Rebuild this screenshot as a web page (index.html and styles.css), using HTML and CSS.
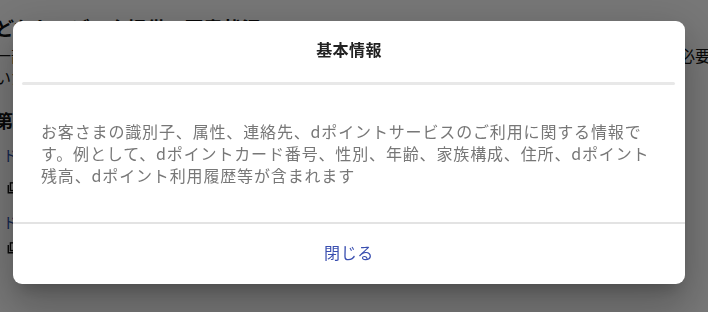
FILE: index.html
```html
<!DOCTYPE html>
<html lang="ja">
<head>
<meta charset="utf-8">
<link rel="stylesheet" href="styles.css">
</head>
<body>
<div class="page">
  <h2 class="page-title">どなたのデータ提供の同意状況</h2>
  <div class="page-lead">
    <span>一部のサービスをご利用いただくには、お客さまのデータの提供について</span>
    <span>同意が必要</span>
  </div>
  <p class="page-lead2">いただく場合があります。</p>
  <h3 class="page-sub">第三者提供</h3>
  <div class="link-row"><a class="link">ドコモのサービス</a></div>
  <div class="icon-row"><svg class="copy-icon" viewBox="0 0 14 14" width="12" height="12"><path d="M1.5 3.5v9h9" fill="none" stroke="#111" stroke-width="1.6"/><rect x="4" y="1" width="9" height="9" fill="none" stroke="#111" stroke-width="1.6"/></svg></div>
  <div class="link-row link-row2"><a class="link">ドコモのサービス</a></div>
  <div class="icon-row icon-row2"><svg class="copy-icon" viewBox="0 0 14 14" width="12" height="12"><path d="M1.5 3.5v9h9" fill="none" stroke="#111" stroke-width="1.6"/><rect x="4" y="1" width="9" height="9" fill="none" stroke="#111" stroke-width="1.6"/></svg></div>
</div>
<div class="overlay"></div>
<div class="dialog">
  <div class="dialog-header">
    <h1 class="dialog-title">基本情報</h1>
  </div>
  <div class="dialog-divider"></div>
  <div class="dialog-body">
    <p class="dialog-text">お客さまの識別子、属性、連絡先、dポイントサービスのご利用に関する情報です。例として、dポイントカード番号、性別、年齢、家族構成、住所、dポイント残高、dポイント利用履歴等が含まれます</p>
  </div>
  <div class="dialog-footer">
    <button class="dialog-close">閉じる</button>
  </div>
</div>
</body>
</html>
```
FILE: styles.css
```css
html, body {
  margin: 0;
  padding: 0;
  width: 708px;
  height: 312px;
  overflow: hidden;
  background: #fff;
  font-family: "Noto Sans CJK JP", "Noto Sans", sans-serif;
}
.page {
  margin-left: -5px;
  width: 716px;
  color: #111;
}
.page-title {
  margin: 0;
  padding-top: 16px;
  font-size: 19px;
  line-height: 24px;
  font-weight: 700;
  white-space: nowrap;
}
.page-lead {
  margin: 4px 0 0;
  font-size: 16px;
  line-height: 22px;
  white-space: nowrap;
  display: flex;
  justify-content: space-between;
  overflow: hidden;
}
.page-lead2 {
  margin: 0;
  font-size: 16px;
  line-height: 22px;
}
.page-sub {
  margin: 20px 0 0;
  font-size: 18px;
  line-height: 24px;
  font-weight: 700;
}
.link-row {
  margin-top: 12px;
  padding-left: 8px;
  line-height: 22px;
  font-size: 15px;
}
.link-row2 {
  margin-top: 14px;
}
.link {
  color: #2b4fa8;
}
.icon-row {
  padding-left: 12px;
  margin-top: 13px;
  height: 18px;
  display: flex;
  align-items: center;
}
.icon-row2 {
  margin-top: 6px;
}
.overlay {
  position: fixed;
  inset: 0;
  background: rgba(0, 0, 0, 0.53);
}
.dialog {
  position: absolute;
  left: 13px;
  top: 21px;
  width: 672px;
  height: 263px;
  background: #fff;
  border-radius: 9px;
  box-shadow: 0 11px 15px -7px rgba(0,0,0,.2), 0 24px 38px 3px rgba(0,0,0,.14), 0 9px 46px 8px rgba(0,0,0,.12);
  display: flex;
  flex-direction: column;
}
.dialog-header {
  height: 61px;
  padding-bottom: 6px;
  box-sizing: border-box;
  display: flex;
  align-items: center;
  justify-content: center;
}
.dialog-title {
  margin: 0;
  font-size: 16px;
  line-height: 22px;
  font-weight: 700;
  letter-spacing: 0.4px;
  color: #222;
}
.dialog-divider {
  margin: 0 10px 0 9px;
  height: 3px;
  border-radius: 2px;
  background: #e8e8e8;
}
.dialog-body {
  padding: 35px 26px 0 28px;
  height: 102px;
}
.dialog-text {
  margin: 0;
  font-size: 16px;
  line-height: 22px;
  letter-spacing: 0.85px;
  color: #777;
}
.dialog-footer {
  border-top: 2px solid #e3e3e3;
  flex: 1;
  padding-bottom: 4px;
  display: flex;
  align-items: center;
  justify-content: center;
}
.dialog-close {
  border: 0;
  background: none;
  padding: 0;
  font-family: inherit;
  font-size: 16px;
  line-height: 22px;
  color: #3a4fb0;
  letter-spacing: 0.6px;
}
```
